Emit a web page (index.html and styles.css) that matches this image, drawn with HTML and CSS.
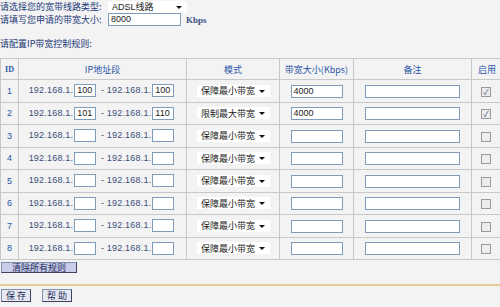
FILE: index.html
```
<!DOCTYPE html>
<html lang="zh-CN">
<head>
  <meta charset="UTF-8">
  <title>IP带宽控制</title>
  <link rel="stylesheet" href="styles.css">
</head>
<body>
  <div class="field">
    <span class="label">请选择您的宽带线路类型:</span>
    <span class="select line-type">ADSL线路<i class="arrow"></i></span>
  </div>
  <div class="field">
    <span class="label">请填写您申请的带宽大小:</span>
    <span class="input total">8000</span>
    <span class="unit">Kbps</span>
  </div>
  <p class="section">请配置IP带宽控制规则:</p>

  <table class="rules">
    <thead>
      <tr>
        <th class="c-id">ID</th>
        <th class="c-ip">IP地址段</th>
        <th class="c-mode">模式</th>
        <th class="c-bw">带宽大小(Kbps)</th>
        <th class="c-note">备注</th>
        <th class="c-on">启用</th>
      </tr>
    </thead>
    <tbody></tbody>
  </table>

  <div class="actions">
    <button class="btn wide">清除所有规则</button>
  </div>
  <div class="footer">
    <button class="btn">保 存</button>
    <button class="btn">帮 助</button>
  </div>

  <script>
    const rules = [
      { from: "100", to: "100", mode: "保障最小带宽", bw: "4000", on: true },
      { from: "101", to: "110", mode: "限制最大带宽", bw: "4000", on: true }
    ];
    const tbody = document.querySelector(".rules tbody");
    for (let i = 0; i < 8; i++) {
      const r = rules[i] || { from: "", to: "", mode: "保障最小带宽", bw: "", on: false };
      const tr = document.createElement("tr");
      tr.innerHTML = `
        <td class="id">${i + 1}</td>
        <td class="ip">192.168.1.<span class="input oct">${r.from}</span> - 192.168.1.<span class="input oct">${r.to}</span></td>
        <td><span class="select mode">${r.mode}<i class="arrow"></i></span></td>
        <td><span class="input bw">${r.bw}</span></td>
        <td><span class="input note"></span></td>
        <td><span class="check">${r.on ? "✓" : ""}</span></td>`;
      tbody.appendChild(tr);
    }
  </script>
</body>
</html>
```
FILE: styles.css
```
body {
  margin: 0;
  background: #f3f3f3;
  font-family: "Noto Sans CJK SC", "Liberation Sans", sans-serif;
  font-size: 9px;
  color: #1c3a78;
  width: 500px;
  height: 307px;
  overflow: hidden;
}
.field {
  display: flex;
  align-items: center;
  height: 13px;
}
.label {
  width: 108px;
  white-space: nowrap;
}
.select {
  position: relative;
  display: inline-flex;
  align-items: center;
  box-sizing: border-box;
  background: #fff;
  padding-left: 4px;
  color: #222;
  height: 12px;
}
.arrow {
  position: absolute;
  right: 5px;
  top: 5px;
  border-left: 3px solid transparent;
  border-right: 3px solid transparent;
  border-top: 3px solid #111;
}
.line-type {
  width: 79px;
  font-family: "Liberation Sans", "Noto Sans CJK SC", sans-serif;
}
.input {
  display: inline-block;
  box-sizing: border-box;
  border: 1px solid #7f9db9;
  background: #fff;
  height: 13px;
  line-height: 11px;
  padding-left: 2px;
  color: #222;
  font-family: "Liberation Sans", sans-serif;
  font-size: 9px;
  vertical-align: middle;
  text-align: left;
}
.total {
  width: 73px;
}
.unit {
  margin-left: 5px;
  font-family: "Liberation Serif", serif;
  font-weight: bold;
  color: #3a4f8a;
}
.section {
  margin: 12px 0 0;
  height: 12px;
  line-height: 12px;
}
.rules {
  margin-top: 8px;
  border-collapse: collapse;
  width: 500px;
  table-layout: fixed;
}
.rules th, .rules td {
  border: 1px solid #c8c8c8;
  text-align: center;
  padding: 0;
  height: 21.5px;
}
.rules th {
  font-weight: normal;
  color: #2a55a8;
  height: 20px;
}
.rules th:last-child, .rules td:last-child {
  border-right-color: transparent;
}
.rules .c-id { width: 17px; }
.rules .c-ip { width: 167px; }
.rules .c-mode { width: 92px; }
.rules .c-bw { width: 73px; }
.rules .c-note { width: 117px; }
.rules .c-on { text-align: left; padding-left: 6px; }
.rules th.c-id {
  font-family: "Liberation Serif", serif;
  font-weight: bold;
  font-size: 8px;
}
.id {
  color: #2a55a8;
  font-family: "Liberation Sans", sans-serif;
}
.ip {
  color: #3a4f7a;
  font-family: "Liberation Sans", sans-serif;
  letter-spacing: 0.2px;
}
.oct {
  width: 22px;
  margin: 0 2px 0 1px;
  letter-spacing: 0;
}
.mode {
  width: 73px;
  margin-left: 1px;
  font-family: "Noto Sans CJK SC", sans-serif;
}
.bw {
  width: 52px;
}
.note {
  width: 95px;
}
.rules td:last-child {
  text-align: left;
  padding-left: 9px;
}
.check {
  display: inline-block;
  width: 10px;
  height: 10px;
  box-sizing: border-box;
  border: 1px solid #9a9a9a;
  background: #ececec;
  font-size: 8px;
  line-height: 8px;
  text-align: center;
  color: #4a5a8a;
  vertical-align: middle;
}
.btn {
  font-family: "Noto Sans CJK SC", sans-serif;
  font-size: 9px;
  color: #1c2a58;
  background: #e6e8f2;
  border: 1px solid #7f8fb0;
  border-right-color: #404060;
  border-bottom-color: #404060;
  padding: 0 4px;
  height: 13px;
  line-height: 11px;
  margin: 0 8px 0 1px;
}
.actions {
  height: 12px;
  margin-top: 1px;
}
.wide {
  width: 76px;
  height: 11px;
  line-height: 9px;
  background: #c9cdea;
}
.footer {
  margin-top: 11px;
  border-top: 2px solid #e8cb94;
  border-bottom: 2px solid #e8cb94;
  padding: 3px 0 4px;
  height: 14px;
}
.footer .btn {
  margin-right: 8px;
}
```
